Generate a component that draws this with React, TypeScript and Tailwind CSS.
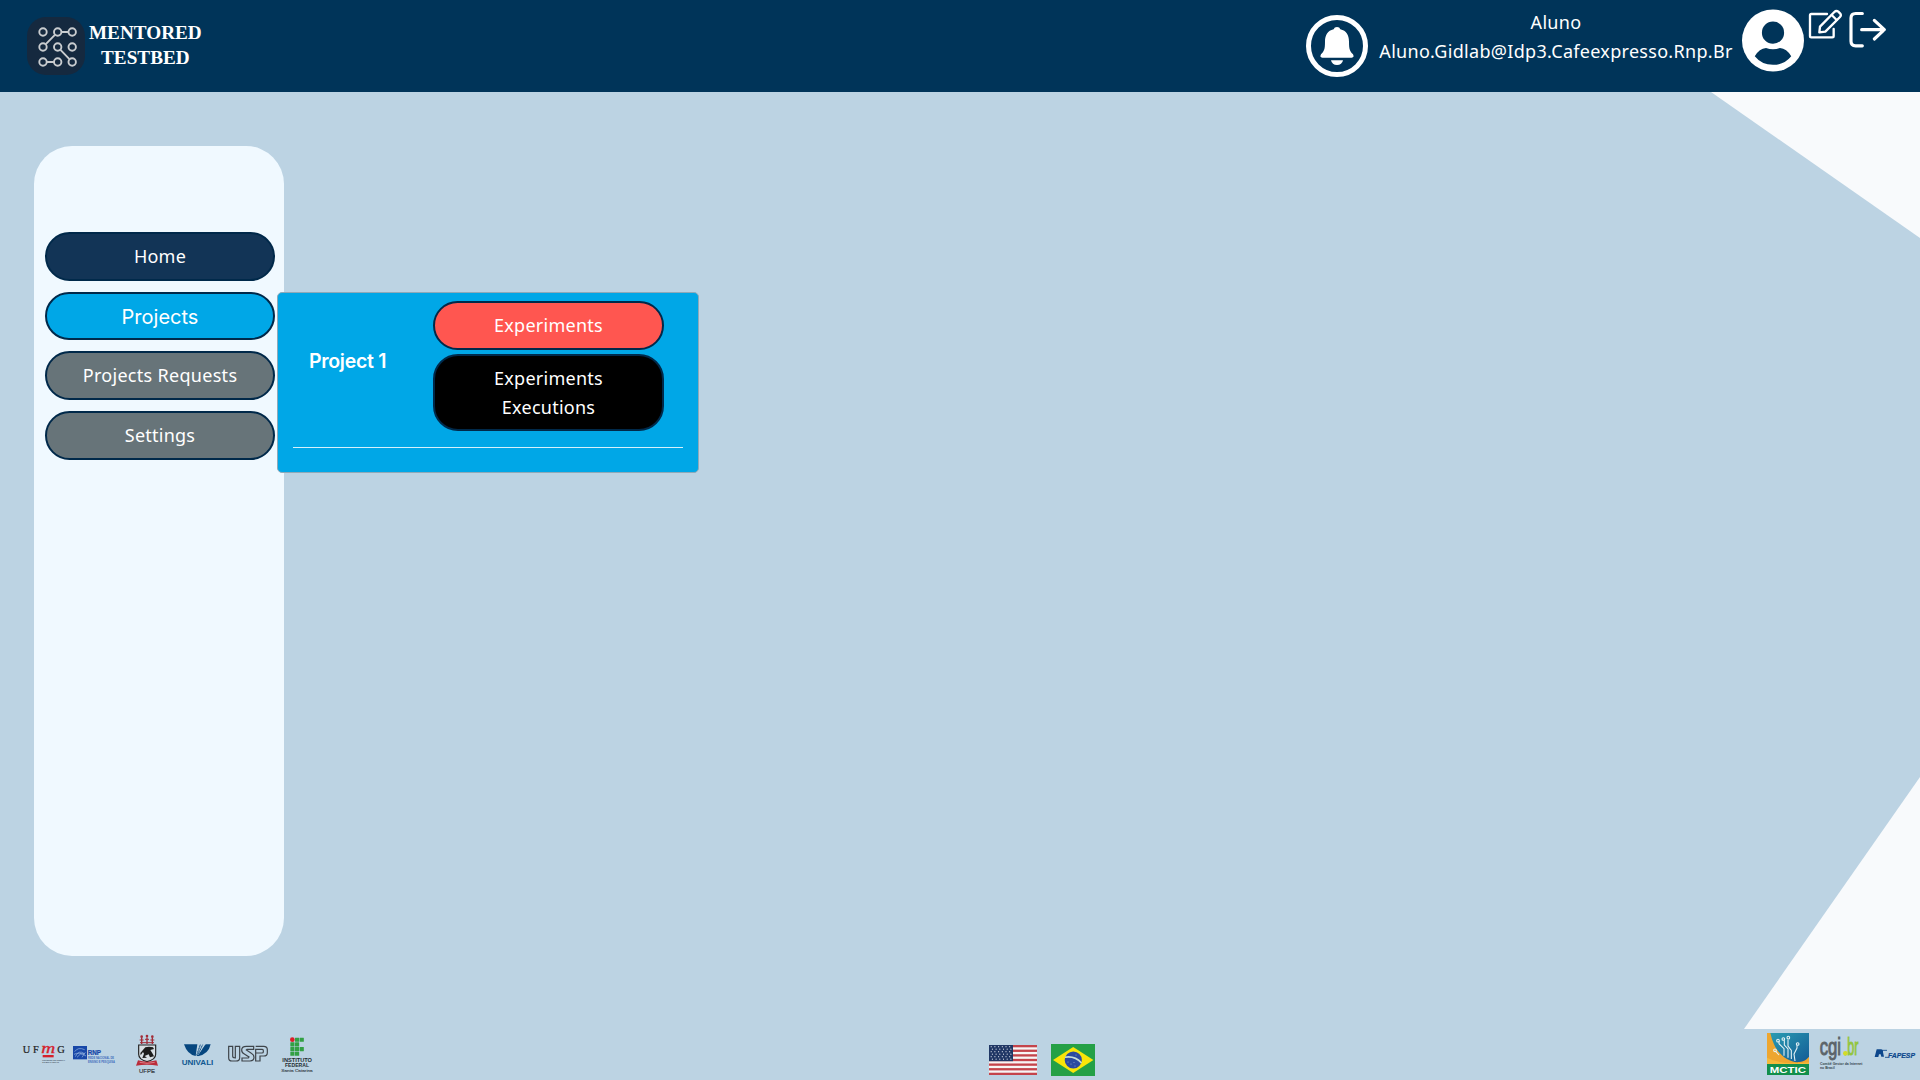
import type { ReactNode } from "react";

function BrandMark() {
  const nodes = [
    [43, 32], [57.7, 32], [72.2, 32],
    [43, 47], [57.7, 47], [72.2, 47],
    [43, 62], [57.7, 62], [72.2, 62],
  ];
  return (
    <svg viewBox="27 17 58 58" className="h-[58px] w-[58px] shrink-0">
      <rect x="27" y="17" width="58" height="58" rx="19" fill="#15293f" />
      <g fill="none" stroke="#c9cccf" strokeWidth="1.9">
        <path d="M61.5 32H68.4M54.9 34.8 45.8 44.2M60.5 49.8 69.4 59.2M46.8 62H53.9" />
        {nodes.map(([x, y]) => (
          <circle key={`${x}-${y}`} cx={x} cy={y} r="3.7" />
        ))}
      </g>
    </svg>
  );
}

function BellIcon() {
  return (
    <svg viewBox="48 45 186 186" className="mt-[15px] h-[62px] w-[62px] shrink-0" fill="#fff">
      <circle cx="141" cy="138" r="85.5" fill="none" stroke="#fff" strokeWidth="15" />
      <path d="M141 81Q149 81 151 88C169 92 177 106 177 125C177 149 180 153 189 163Q194 173 185 173H97Q88 173 93 163C102 153 105 149 105 125C105 106 113 92 131 88Q133 81 141 81Z" />
      <path d="M123 181H159Q156 195 141 195Q126 195 123 181Z" />
    </svg>
  );
}

function UserIcon() {
  return (
    <svg viewBox="425.5 27 187 189" className="ml-[9px] mt-[9px] h-[63px] w-[62px] shrink-0">
      <circle cx="519" cy="121.5" r="93.5" fill="#fff" />
      <circle cx="519" cy="98" r="33.5" fill="#003459" />
      <path
        d="M464 169Q478 145 498 144Q519 152 540 144Q560 145 574 169Q553 195 519 195Q485 195 464 169Z"
        fill="#003459"
      />
    </svg>
  );
}

function EditIcon() {
  return (
    <svg
      viewBox="624 24 105 96"
      className="ml-[4px] mt-[8px] h-8 w-[35px] shrink-0"
      fill="none"
      stroke="#fff"
      strokeWidth="7"
      strokeLinejoin="round"
      strokeLinecap="round"
    >
      <path d="M681 42H634Q630 42 630 46V108Q630 112 634 112H697Q701 112 701 108V87" />
      <path d="M658 97 660 80 703 36Q709 30 715 35L720 40Q725 46 720 51L676 95Z" />
      <path d="M695 45 710 60" />
    </svg>
  );
}

function LogoutIcon() {
  return (
    <svg
      viewBox="744 30 120 117"
      className="ml-[5px] mt-[10px] h-[39px] w-10 shrink-0"
      fill="none"
      stroke="#fff"
      strokeWidth="9.5"
      strokeLinejoin="round"
      strokeLinecap="round"
    >
      <path d="M787 40.5H767Q753 40.5 753 54V124Q753 137.500 767 137.500H787" />
      <path d="M785 89H852M823 61 853 89 823 117" />
    </svg>
  );
}

function Logo({ x, w, y = 27, children }: { x: number; w: number; y?: number; children: ReactNode }) {
  return (
    <svg
      viewBox={`${x} ${y} ${w} 153`}
      width={w / 3}
      height={51}
      className="shrink-0 font-['Liberation_Sans',sans-serif] tracking-normal"
    >
      {children}
    </svg>
  );
}

function PartnerLogos() {
  return (
    <div className="flex w-[320px]">
      <Logo x={0} w={207}>
        <g fontFamily="Liberation Serif" fontSize="31" fill="#222" stroke="#222" strokeWidth=".7">
          <text x="68" y="99">U</text>
          <text x="99" y="99">F</text>
          <text x="172" y="99">G</text>
        </g>
        <text x="124" y="99" fontFamily="Liberation Serif" fontSize="46" fontStyle="italic" fill="#d5202b" stroke="#d5202b" strokeWidth="1" textLength="42" lengthAdjust="spacingAndGlyphs">m</text>
        <rect x="128" y="105" width="33" height="7" fill="#d5202b" />
        <g fontSize="6.5" fontWeight="bold" fill="#44525f">
          <text x="127" y="123" textLength="68" lengthAdjust="spacingAndGlyphs">UNIVERSIDADE FEDERAL</text>
          <text x="127" y="130" textLength="50" lengthAdjust="spacingAndGlyphs">DE MINAS GERAIS</text>
        </g>
      </Logo>
      <Logo x={207} w={150}>
        <rect x="219" y="78" width="42" height="40" fill="#1747a8" />
        <g fill="none" stroke="#9db9e2" strokeWidth="2">
          <path d="M224 95Q234 80 254 89M226 110Q236 88 253 101Q240 98 231 112M222 103Q238 94 258 108M246 112 256 97" />
        </g>
        <text x="263" y="105" fontSize="20" fontWeight="bold" fill="#1747a8" stroke="#1747a8" strokeWidth=".7" textLength="40" lengthAdjust="spacingAndGlyphs">RNP</text>
        <g fontSize="8.5" fontWeight="bold" fill="#3d6cbc">
          <text x="264" y="118" textLength="78" lengthAdjust="spacingAndGlyphs">REDE NACIONAL DE</text>
          <text x="264" y="128" textLength="81" lengthAdjust="spacingAndGlyphs">ENSINO E PESQUISA</text>
        </g>
      </Logo>
      <Logo x={357} w={153}>
        <g fill="none" stroke="#a22c38" strokeWidth="4">
          <path d="M425 54V72M441 52V72M457 54V72" />
          <path d="M419 60H431M435 58H447M451 60H463M420 68H462" strokeWidth="3" />
          <circle cx="425" cy="50" r="2" />
          <circle cx="441" cy="48" r="2" />
          <circle cx="457" cy="50" r="2" />
        </g>
        <path d="M416 75H467V103Q467 119 441 125Q416 119 416 103Z" fill="#d8dfe4" stroke="#222" strokeWidth="3.5" />
        <path d="M421 99 436 82 447 80 459 82 462 87 451 90 458 101 462 109 450 112 446 103 434 108 441 113 427 114 432 101 429 96 422 106Z" fill="#1c1c1c" />
        <path d="M408 137 414 121Q441 129 469 121L474 137Q441 131 408 137Z" fill="#ba2c3a" />
        <path d="M419 127Q441 133 464 127" fill="none" stroke="#e7a5aa" strokeWidth="2" />
        <text x="417" y="160" fontSize="18" fill="#30363b" stroke="#30363b" strokeWidth=".5" textLength="48" lengthAdjust="spacingAndGlyphs">UFPE</text>
      </Logo>
      <Logo x={30} w={150}>
        <path d="M72 73H112L107 108Q82 104 72 73Z" fill="#06467f" />
        <path d="M137 73H152Q145 104 113 109Z" fill="#06467f" />
        <path d="M110 106 121 74M112 108 128 74M115 108 136 76" stroke="#06467f" strokeWidth="3" strokeDasharray="4 1" />
        <text x="65" y="135" fontSize="20" fontWeight="bold" fill="#0f5891" textLength="95" lengthAdjust="spacingAndGlyphs">UNIVALI</text>
      </Logo>
      <Logo x={180} w={165}>
        <path
          d="M206 79H218V109Q218 114 226 114V79H239V113Q239 123 228 123H216Q206 123 206 113ZM281 79H259Q245 79 245 90Q245 98 253 102L267 111 265 114H246V123H270Q282 123 282 112Q282 105 274 100L259 90 261 88H281ZM287 79H311Q322 79 322 89V98Q322 108 311 108H300V123H287V88H307Q310 88 310 92V96Q310 99 306 99H287"
          fill="none"
          stroke="#3f454b"
          strokeWidth="3.6"
        />
      </Logo>
      <Logo x={345} w={135}>
        <circle cx="397" cy="59" r="7" fill="#dc1f29" />
        <g fill="#32a044">
          {[[405, 53], [419, 53], [391, 67], [405, 67], [391, 81], [405, 81], [419, 81], [391, 95], [405, 95]].map(([x, y]) => (
            <rect key={`${x}-${y}`} x={x} y={y} width="12.5" height="12.5" rx="1" />
          ))}
        </g>
        <g fontWeight="bold" fontSize="16" fill="#222b30">
          <text x="367" y="127" textLength="89" lengthAdjust="spacingAndGlyphs">INSTITUTO</text>
          <text x="375" y="141" textLength="72" lengthAdjust="spacingAndGlyphs">FEDERAL</text>
        </g>
        <text x="364" y="157" fontSize="13" fill="#3e484f" stroke="#3e484f" strokeWidth=".4" textLength="94" lengthAdjust="spacingAndGlyphs">Santa Catarina</text>
      </Logo>
    </div>
  );
}

function UsaFlag() {
  const stars = Array.from({ length: 36 }, (_, i) => [2.2 + (i % 6) * 3.7 + (Math.floor(i / 6) % 2) * 1.2, 1.7 + Math.floor(i / 6) * 2.5]);
  return (
    <svg viewBox="0 0 48 30" className="h-[30px] w-12">
      <rect width="48" height="30" fill="#f7f5f5" />
      {Array.from({ length: 7 }, (_, i) => (
        <rect key={i} y={i * 4.62} width="48" height="2.31" fill="#c4444b" />
      ))}
      <rect width="24" height="16.2" fill="#203765" />
      {stars.map(([x, y], i) => (
        <circle key={i} cx={x} cy={y} r=".58" fill="#d6dbe6" />
      ))}
    </svg>
  );
}

function BrazilFlag() {
  return (
    <svg viewBox="0 0 44 32" className="h-8 w-11">
      <rect width="44" height="32" fill="#24a046" />
      <path d="M2 16 22.2 3 42.4 16 22.2 29Z" fill="#f9e509" />
      <circle cx="22.3" cy="16" r="8.6" fill="#2c4aa0" />
      <path d="M14 13.2Q24 11.6 30.5 19" fill="none" stroke="#c9ded8" strokeWidth="1.6" />
      <g fill="#9eb0d6">
        <circle cx="17" cy="18" r=".5" />
        <circle cx="20" cy="20" r=".5" />
        <circle cx="23" cy="18.5" r=".5" />
        <circle cx="24" cy="22" r=".5" />
        <circle cx="25" cy="11" r=".5" />
      </g>
    </svg>
  );
}

function SponsorLogos() {
  return (
    <div className="flex">
      <Logo x={105} w={150} y={57}>
        <defs>
          <linearGradient id="mctic" x1="0" y1="0" x2="1" y2="1">
            <stop offset="0" stopColor="#2a9cb2" />
            <stop offset="1" stopColor="#145b96" />
          </linearGradient>
        </defs>
        <rect x="111" y="69" width="126" height="93" fill="#eea62f" />
        <path d="M121 69H237V140Q226 154 208 156C180 160 146 135 132 103Q125 88 121 69Z" fill="url(#mctic)" />
        <path d="M111 143Q155 167 237 157V163H111Z" fill="#f5b93b" />
        <g fill="none" stroke="#e8f4f6" strokeWidth="3.2">
          <path d="M147 135 137 124M162 137V116L147 101V94M174 143V117L163 105V91M184 147V121L174 108V89M195 153 192 132 201 114V106" />
          <circle cx="135" cy="121" r="4" />
          <circle cx="144" cy="92" r="4" />
          <circle cx="160" cy="87" r="4" />
          <circle cx="175" cy="83" r="4" />
          <circle cx="203" cy="102" r="4" />
        </g>
        <rect x="111" y="162" width="126" height="33" fill="#128f4b" />
        <text x="119" y="188" fontSize="28" fontWeight="bold" fill="#fff" textLength="109" lengthAdjust="spacingAndGlyphs">MCTIC</text>
      </Logo>
      <Logo x={255} w={165} y={57}>
        <g fontSize="74">
          <text x="269" y="134" fill="#5c6469" stroke="#5c6469" strokeWidth="3" textLength="64" lengthAdjust="spacingAndGlyphs">cgi</text>
          <text x="341" y="136" fill="#93c53d" stroke="#93c53d" strokeWidth="3" textLength="44" lengthAdjust="spacingAndGlyphs">.br</text>
        </g>
        <circle cx="346" cy="130" r="7" fill="#d2dc28" />
        <g fontSize="12" fontWeight="bold" fill="#35434c">
          <text x="270" y="164" textLength="127" lengthAdjust="spacingAndGlyphs">Comitê Gestor da Internet</text>
          <text x="270" y="178" textLength="44" lengthAdjust="spacingAndGlyphs">no Brasil</text>
        </g>
      </Logo>
      <Logo x={420} w={150} y={57}>
        <path d="M440 118H453Q460 119 459 127L462 140H454L452 133H447L445 141H434Z" fill="#0d478c" />
        <path d="M456 121H471M465 142H475" stroke="#0d478c" strokeWidth="2.5" />
        <text x="474" y="143" fontSize="23" fontWeight="bold" fontStyle="italic" fill="#0d478c" stroke="#0d478c" strokeWidth=".6" textLength="81" lengthAdjust="spacingAndGlyphs">FAPESP</text>
      </Logo>
    </div>
  );
}

const pill =
  "flex items-center justify-center rounded-[25px] border-2 border-[#00294a] text-center text-white";

export default function App() {
  return (
    <div className="flex h-[1080px] w-[1920px] flex-col overflow-hidden bg-[#bcd3e3] font-['Noto_Sans',sans-serif] text-[18px] leading-[29px] tracking-[0.25px]">
      <header className="flex h-[92px] items-start justify-between bg-[#003459] text-white">
        <div className="ml-[27px] mt-[17px] flex items-start">
          <BrandMark />
          <div className="ml-1 mt-[3px] text-center font-['Liberation_Serif',serif] text-[19.2px] font-bold leading-[25px] tracking-normal">
            MENTORED
            <br />
            TESTBED
          </div>
        </div>
        <div className="mr-8 flex items-start">
          <BellIcon />
          <div className="ml-[11px] mt-2 w-[354px] whitespace-nowrap text-center tracking-[0.3px]">
            Aluno
            <br />
            Aluno.Gidlab@Idp3.Cafeexpresso.Rnp.Br
          </div>
          <UserIcon />
          <EditIcon />
          <LogoutIcon />
        </div>
      </header>

      <main className="relative flex h-[937px] items-start">
        <div className="absolute right-0 top-0 h-[146px] w-[209px] bg-[#f8fafc] [clip-path:polygon(0_0,100%_0,100%_100%)]" />
        <div className="absolute bottom-0 right-0 h-[252px] w-[176px] bg-[#f8fafc] [clip-path:polygon(100%_0,100%_100%,0_100%)]" />

        <aside className="ml-[34px] mt-[54px] h-[810px] w-[250px] rounded-[38px] bg-[#f0f9ff] pl-[11px] pt-[86px]">
          <nav className="flex flex-col">
            <button className={`${pill} h-[49px] w-[230px] bg-[#123456]`}>Home</button>
            <div className="relative mt-[11px]">
              <button className={`${pill} h-12 w-[230px] bg-[#00a7e7] pt-0.5 font-['Inter',sans-serif] text-[20px] tracking-normal`}>
                Projects
              </button>
              <div className="absolute left-[232px] top-0 h-[181px] w-[422px] rounded-[5px] border border-[#8fa9b8] bg-[#00a7e7] px-[15px] pt-2">
                <div className="flex h-[147px] border-b border-[#d5f0fb]">
                  <div className="flex h-[120px] w-[140px] items-center pl-4 font-['Inter',sans-serif] text-[19.5px] font-semibold tracking-[-0.3px] text-white">
                    Project 1
                  </div>
                  <div className="flex w-[231px] flex-col gap-1">
                    <button className={`${pill} h-[49px] bg-[#ff5650]`}>Experiments</button>
                    <button className={`${pill} h-[77px] bg-black px-12`}>Experiments Executions</button>
                  </div>
                </div>
              </div>
            </div>
            <button className={`${pill} mt-[11px] h-[49px] w-[230px] bg-[#677479] tracking-[0.3px]`}>Projects Requests</button>
            <button className={`${pill} mt-[11px] h-[49px] w-[230px] bg-[#677479]`}>Settings</button>
          </nav>
        </aside>
      </main>

      <footer className="flex h-[51px] items-start justify-between">
        <PartnerLogos />
        <div className="mr-0.5 mt-[15px] flex items-center gap-[14px]">
          <UsaFlag />
          <BrazilFlag />
        </div>
        <SponsorLogos />
      </footer>
    </div>
  );
}
